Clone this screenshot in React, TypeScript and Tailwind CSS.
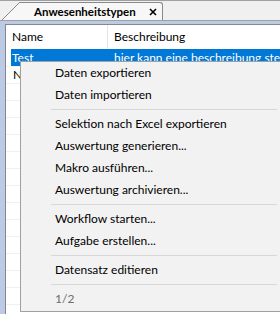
const menu: (string | null)[] = [
  'Daten exportieren',
  'Daten importieren',
  null,
  'Selektion nach Excel exportieren',
  'Auswertung generieren...',
  'Makro ausführen...',
  'Auswertung archivieren...',
  null,
  'Workflow starten...',
  'Aufgabe erstellen...',
  null,
  'Datensatz editieren',
  null,
]

const App = () => {
  return (
    <div className="relative w-[280px] h-[314px] overflow-hidden bg-[#f0f0f0] font-['Lato',sans-serif] text-[12px] text-black">
      {/* Tab strip */}
      <div className="h-[21px] border-t border-b border-[#a0a0a0] flex items-end pl-[2px]">
        <div className="flex items-end h-[18px]">
          <svg width="18" height="18" viewBox="0 0 18 18" className="block">
            <polygon points="0,18 18,0 18,18" fill="#f7f7f7" />
            <line x1="0" y1="18" x2="18" y2="0" stroke="#898989" strokeWidth="1" />
          </svg>
          <div className="h-[18px] bg-[#f7f7f7] border-t border-r border-[#898989] rounded-tr-[3px] flex items-center pl-[14px] pr-[5px] gap-[13px]">
            <span className="font-bold text-[11.5px] leading-none">Anwesenheitstypen</span>
            <svg width="8" height="8" viewBox="0 0 8 8" className="block">
              <path d="M1 1 L7 7 M7 1 L1 7" stroke="#000" strokeWidth="1.6" />
            </svg>
          </div>
        </div>
      </div>

      {/* Docked grid panel */}
      <div className="h-[293px] bg-[#bccae6] pt-[3px] pl-[5px]">
        <div className="h-full bg-white border-t border-l border-[#828790] overflow-hidden">
          <div className="flex h-[24px] items-center">
            <div className="w-[5px]" />
            <div className="w-[97px] h-full border-r border-[#e5e5e5] flex items-center pl-[1px]">Name</div>
            <div className="pl-[6px]">Beschreibung</div>
          </div>
          <div className="flex h-[18px] border-b border-[#f0f0f0]">
            <div className="w-[5px] bg-white" />
            <div className="flex flex-1 bg-[#0078d7] text-white items-center whitespace-nowrap overflow-hidden">
              <div className="w-[97px] shrink-0 pl-[1px]">Test</div>
              <div className="pl-[6px]">hier kann eine beschreibung stehen</div>
            </div>
          </div>
          <div className="flex h-[17px] border-b border-[#f0f0f0] items-center">
            <div className="w-[5px]" />
            <div className="w-[97px] pl-[2px]">Neu</div>
          </div>
          {Array.from({ length: 14 }).map((_, i) => (
            <div key={i} className="h-[17px] border-b border-[#f0f0f0]" />
          ))}
        </div>
      </div>

      {/* Context menu */}
      <div className="absolute left-[20px] top-[61px] w-[261px] bg-[#f2f2f2] border border-[#a0a0a0] pb-[1px]">
        {menu.map((item, i) =>
          item === null ? (
            <div key={i} className="h-[7px] flex items-center pl-[30px] pr-[3px]">
              <div className="h-px w-full bg-[#d7d7d7]" />
            </div>
          ) : (
            <div key={i} className="h-[22px] flex items-center pl-[34px]">
              {item}
            </div>
          )
        )}
        <div className="h-[22px] flex items-center pl-[34px] text-[#6d6d6d]">1/2</div>
      </div>
    </div>
  )
}

export default App
